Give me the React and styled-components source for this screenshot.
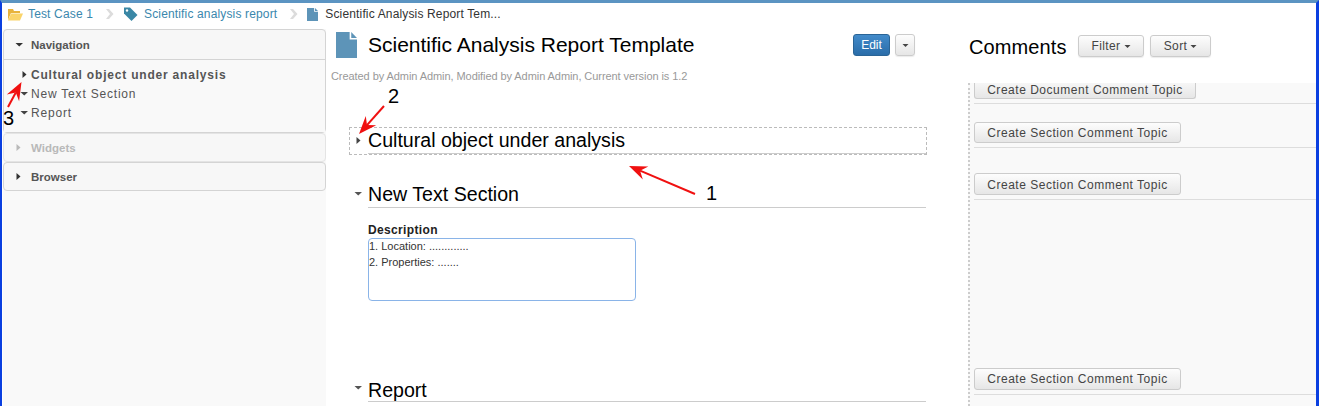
import React from 'react';
import styled, { createGlobalStyle } from 'styled-components';

const GlobalStyle = createGlobalStyle`
  html, body {
    margin: 0;
    padding: 0;
    background: #fff;
    overflow: hidden;
  }
  * {
    box-sizing: border-box;
  }
`;

// Window frame
const Frame = styled.div`
  position: relative;
  width: 1319px;
  height: 406px;
  overflow: hidden;
  background: #fff;
  border-left: 2px solid #0a3fe0;
  border-right: 3px solid #0a3fe0;
  border-top: 3px solid #5b94c2;
  font-family: "Liberation Sans", Arial, sans-serif;
`;

const Breadcrumb = styled.div`
  display: flex;
  align-items: center;
  height: 22px;
  padding-left: 5px;
  font-size: 12px;
  letter-spacing: 0.15px;
`;

const Crumb = styled.span`
  color: ${(p) => (p.$current ? '#333' : '#3a87ad')};
  margin-left: ${(p) => p.$gap || 4}px;
`;

const CrumbSep = styled.svg`
  width: 10px;
  height: 12px;
  margin: 0 8px 0 12px;
`;

const Columns = styled.div`
  display: flex;
  align-items: flex-start;
`;

// Left accordion
const Sidebar = styled.div`
  width: 323px;
  margin-left: 1px;
  margin-top: 4px;
  flex: none;
  background: #f9f9f9;
  height: 377px;
`;

const Panel = styled.div`
  border: 1px solid ${(p) => (p.$muted ? '#e4e4e4' : '#d4d4d4')};
  border-radius: 4px;
  background: #f7f7f7;
`;

const PanelHeader = styled.div`
  display: flex;
  align-items: center;
  height: ${(p) => p.$h || 27}px;
  padding-left: ${(p) => p.$pad || 11}px;
  font-size: 11.5px;
  font-weight: bold;
  color: ${(p) => (p.$muted ? '#b9b9b9' : '#555')};
`;

const PanelBody = styled.div`
  border-top: 1px solid #d4d4d4;
  height: 73px;
  padding-top: 5px;
  background: #f9f9f9;
`;

const NavRow = styled.div`
  display: flex;
  align-items: center;
  height: 19px;
  padding-left: 16px;
  font-size: 12px;
  letter-spacing: 0.8px;
  font-weight: ${(p) => (p.$bold ? 'bold' : 'normal')};
  color: #555;
`;

const Caret = styled.svg`
  flex: none;
  width: ${(p) => p.$w || 9}px;
  height: 9px;
  margin-right: ${(p) => p.$gap ?? 7}px;
  margin-bottom: ${(p) => p.$up || 0}px;
  fill: ${(p) => p.$color || '#333'};
`;

// Main document column
const Main = styled.div`
  width: 642px;
  flex: none;
  padding-left: 5px;
`;

const TitleRow = styled.div`
  display: flex;
  align-items: center;
  height: 40px;
  padding-left: 5px;
`;

const Title = styled.h1`
  margin: 0 0 0 11px;
  font-size: 21px;
  font-weight: normal;
  color: #000;
  flex: 1;
  white-space: nowrap;
`;

const EditButton = styled.button`
  width: 37px;
  height: 22px;
  padding: 0;
  font: 12px "Liberation Sans", Arial, sans-serif;
  color: #fff;
  background: linear-gradient(#428bca, #2a6da9);
  border: 1px solid #2a6496;
  border-radius: 3px;
`;

const CaretButton = styled.button`
  display: flex;
  align-items: center;
  justify-content: center;
  width: 20px;
  height: 22px;
  margin: 0 53px 0 5px;
  padding: 0;
  background: linear-gradient(#fdfdfd, #e6e6e6);
  border: 1px solid #ccc;
  border-radius: 3px;
  box-shadow: 0 1px 1px rgba(0, 0, 0, 0.08);
`;

const Meta = styled.div`
  margin-top: 4px;
  height: 14px;
  font-size: 11px;
  letter-spacing: -0.07px;
  line-height: 14px;
  color: #999;
  white-space: nowrap;
`;

const SectionBox = styled.div`
  display: flex;
  align-items: center;
  margin: ${(p) => p.$top || 0}px 0 0 18px;
  width: 578px;
  height: 28px;
  border: ${(p) => (p.$outlined ? '1px dashed #bbb' : '1px solid transparent')};
  padding-left: 4px;
`;

const SectionHead = styled.div`
  flex: 1;
  align-self: stretch;
  display: flex;
  align-items: center;
  padding-top: ${(p) => p.$low || 0}px;
  font-size: 19.6px;
  color: #000;
  border-bottom: 1px solid #ccc;
  margin-left: 5px;
`;

const FieldLabel = styled.div`
  margin: 13px 0 0 37px;
  height: 16px;
  font-size: 12px;
  letter-spacing: 0.35px;
  line-height: 16px;
  font-weight: bold;
  color: #222;
`;

const TextBox = styled.div`
  margin-left: 37px;
  width: 268px;
  height: 63px;
  border: 1px solid #8ab4e8;
  border-radius: 4px;
  padding: 0;
  font-size: 11px;
  line-height: 15.5px;
  color: #333;
`;

// Comments column
const CommentsColumn = styled.div`
  flex: 1;
  min-width: 0;
`;

const CommentsHeader = styled.div`
  display: flex;
  align-items: center;
  height: 58px;
  padding: 0 0 16px 1px;
`;

const CommentsTitle = styled.div`
  font-size: 20px;
  letter-spacing: 0.1px;
  color: #000;
  width: 109px;
  padding-top: 2px;
`;

const GreyButton = styled.button`
  display: flex;
  align-items: center;
  justify-content: center;
  gap: 3px;
  width: ${(p) => p.$w}px;
  height: 22px;
  margin-right: 6px;
  padding: 0;
  font: 12px "Liberation Sans", Arial, sans-serif;
  letter-spacing: 0.4px;
  color: #444;
  background: linear-gradient(#fdfdfd, #e6e6e6);
  border: 1px solid #ccc;
  border-radius: 3px;
  box-shadow: 0 1px 1px rgba(0, 0, 0, 0.08);
`;

const CommentsList = styled.div`
  height: 323px;
  background: #f9f9f9;
  border-left: 2px dotted #ccc;
  padding-left: 4px;
`;

const TopicRow = styled.div`
  height: ${(p) => p.$h}px;
  border-bottom: 1px solid #ddd;
  display: flex;
  align-items: flex-end;
  padding-bottom: 4px;
`;

const TopicButton = styled.button`
  flex: none;
  height: ${(p) => p.$h || 22}px;
  width: ${(p) => p.$w}px;
  padding: ${(p) => p.$drop || 0}px 0 0;
  font: 12px "Liberation Sans", Arial, sans-serif;
  letter-spacing: 0.52px;
  color: #444;
  background: linear-gradient(#fdfdfd, #e6e6e6);
  border: 1px solid #ccc;
  border-radius: 3px;
`;

// the list scrolled under the header, so this one has lost its top edge
const ScrolledTopicButton = styled(TopicButton)`
  height: 16px;
  padding: 0 0 4px;
  border-top: 0;
  border-radius: 0 0 3px 3px;
  background: linear-gradient(#f6f6f6, #e6e6e6);
`;

// Screenshot annotations lying over the page
const AnnotationLayer = styled.svg`
  position: absolute;
  left: -2px;
  top: -3px;
  width: 1319px;
  height: 406px;
  pointer-events: none;
`;

const Mark = styled.span`
  position: absolute;
  left: ${(p) => p.$x}px;
  top: ${(p) => p.$y}px;
  font-size: 20px;
  line-height: 20px;
  color: #000;
`;

const CaretRight = (props) => (
  <Caret viewBox="0 0 9 9" {...props}>
    <path d="M2.5 1 L6.5 4.5 L2.5 8 Z" />
  </Caret>
);

const CaretDown = (props) => (
  <Caret viewBox="0 0 9 9" {...props}>
    <path d="M0.5 3 L8 3 L4.25 6.5 Z" />
  </Caret>
);

const SmallCaret = () => (
  <Caret viewBox="0 0 7 9" $w={7} $gap={0} $color="#444">
    <path d="M0.5 3 L6.5 3 L3.5 6 Z" />
  </Caret>
);

const DocIcon = ({ width, height }) => (
  <svg width={width} height={height} viewBox="0 0 20 24" preserveAspectRatio="none">
    <path d="M0 0 H13 V7 H20 V24 H0 Z" fill="#5d94b8" />
    <path d="M14.5 0 L20 5.5 H14.5 Z" fill="#5d94b8" />
  </svg>
);

const FolderIcon = () => (
  <svg width="16" height="13" viewBox="0 0 16 13">
    <path d="M1 1 H6 L7 3 H13 V5 H4 L1 12 Z" fill="#e8b33c" />
    <path d="M4 5.5 H16 L13 12.5 H1 Z" fill="#fad46b" />
  </svg>
);

const TagIcon = () => (
  <svg width="15" height="15" viewBox="0 0 15 15">
    <path d="M1 0.5 H7 L14.5 8 L8.5 14 L1 6.5 Z" fill="#3a87a5" />
    <circle cx="4" cy="3.5" r="1.2" fill="#fff" />
  </svg>
);

const Chevron = () => (
  <CrumbSep viewBox="0 0 10 12">
    <path d="M1 1 L4 1 L8.5 6 L4 11 L1 11 L5 6 Z" fill="#dcdcdc" />
  </CrumbSep>
);

const Arrow = ({ from, to }) => {
  const [x1, y1] = from;
  const [x2, y2] = to;
  const len = Math.hypot(x2 - x1, y2 - y1);
  const ux = (x2 - x1) / len;
  const uy = (y2 - y1) / len;
  const bx = x2 - ux * 18;
  const by = y2 - uy * 18;
  const nx = -uy * 7;
  const ny = ux * 7;
  const notchX = x2 - ux * 12;
  const notchY = y2 - uy * 12;
  return (
    <g fill="#f01010" stroke="none">
      <line x1={x1} y1={y1} x2={notchX} y2={notchY} stroke="#f01010" strokeWidth="2" />
      <path d={`M${x2} ${y2} L${bx + nx} ${by + ny} L${notchX} ${notchY} L${bx - nx} ${by - ny} Z`} />
    </g>
  );
};

const App = () => (
  <>
    <GlobalStyle />
    <Frame>
      <Breadcrumb>
        <FolderIcon />
        <Crumb $gap={5}>Test Case 1</Crumb>
        <Chevron />
        <TagIcon />
        <Crumb $gap={6}>Scientific analysis report</Crumb>
        <Chevron />
        <DocIcon width={11} height={13} />
        <Crumb $current $gap={7}>Scientific Analysis Report Tem...</Crumb>
      </Breadcrumb>
      <Columns>
        <Sidebar>
          <Panel>
            <PanelHeader $h={29}>
              <CaretDown />
              Navigation
            </PanelHeader>
            <PanelBody>
              <NavRow $bold>
                <CaretRight $gap={2} />
                Cultural object under analysis
              </NavRow>
              <NavRow>
                <CaretDown $gap={2} $color="#444" />
                New Text Section
              </NavRow>
              <NavRow>
                <CaretDown $gap={2} $color="#444" />
                Report
              </NavRow>
            </PanelBody>
          </Panel>
          <Panel $muted>
            <PanelHeader $muted $pad={10}>
              <CaretRight $gap={8} $color="#b9b9b9" />
              Widgets
            </PanelHeader>
          </Panel>
          <Panel>
            <PanelHeader $pad={10}>
              <CaretRight $gap={8} />
              Browser
            </PanelHeader>
          </Panel>
        </Sidebar>
        <Main>
          <TitleRow>
            <DocIcon width={21} height={26} />
            <Title>Scientific Analysis Report Template</Title>
            <EditButton>Edit</EditButton>
            <CaretButton>
              <SmallCaret />
            </CaretButton>
          </TitleRow>
          <Meta>Created by Admin Admin, Modified by Admin Admin, Current version is 1.2</Meta>
          <SectionBox $outlined $top={44}>
            <CaretRight $gap={0} $color="#444" $up={1} />
            <SectionHead>Cultural object under analysis</SectionHead>
          </SectionBox>
          <SectionBox $top={26}>
            <CaretDown $gap={0} $color="#555" $up={3} />
            <SectionHead>New Text Section</SectionHead>
          </SectionBox>
          <FieldLabel>Description</FieldLabel>
          <TextBox>
            1. Location: .............
            <br />
            2. Properties: .......
          </TextBox>
          <SectionBox $top={74}>
            <CaretDown $gap={0} $color="#555" $up={3} />
            <SectionHead $low={4}>Report</SectionHead>
          </SectionBox>
        </Main>
        <CommentsColumn>
          <CommentsHeader>
            <CommentsTitle>Comments</CommentsTitle>
            <GreyButton $w={66}>
              Filter
              <SmallCaret />
            </GreyButton>
            <GreyButton $w={61}>
              Sort
              <SmallCaret />
            </GreyButton>
          </CommentsHeader>
          <CommentsList>
            <TopicRow $h={21}>
              <ScrolledTopicButton $w={222}>Create Document Comment Topic</ScrolledTopicButton>
            </TopicRow>
            <TopicRow $h={44}>
              <TopicButton $w={207} $h={21}>Create Section Comment Topic</TopicButton>
            </TopicRow>
            <TopicRow $h={52}>
              <TopicButton $w={207} $drop={1}>Create Section Comment Topic</TopicButton>
            </TopicRow>
            <TopicRow $h={195}>
              <TopicButton $w={207}>Create Section Comment Topic</TopicButton>
            </TopicRow>
          </CommentsList>
        </CommentsColumn>
      </Columns>
      <AnnotationLayer viewBox="0 0 1319 406">
        <Arrow from={[8, 107]} to={[21.5, 82]} />
        <Arrow from={[384, 106]} to={[359, 134]} />
        <Arrow from={[695, 194]} to={[629, 166]} />
      </AnnotationLayer>
      <Mark $x={1} $y={105}>3</Mark>
      <Mark $x={386} $y={83}>2</Mark>
      <Mark $x={704} $y={180}>1</Mark>
    </Frame>
  </>
);

export default App;
